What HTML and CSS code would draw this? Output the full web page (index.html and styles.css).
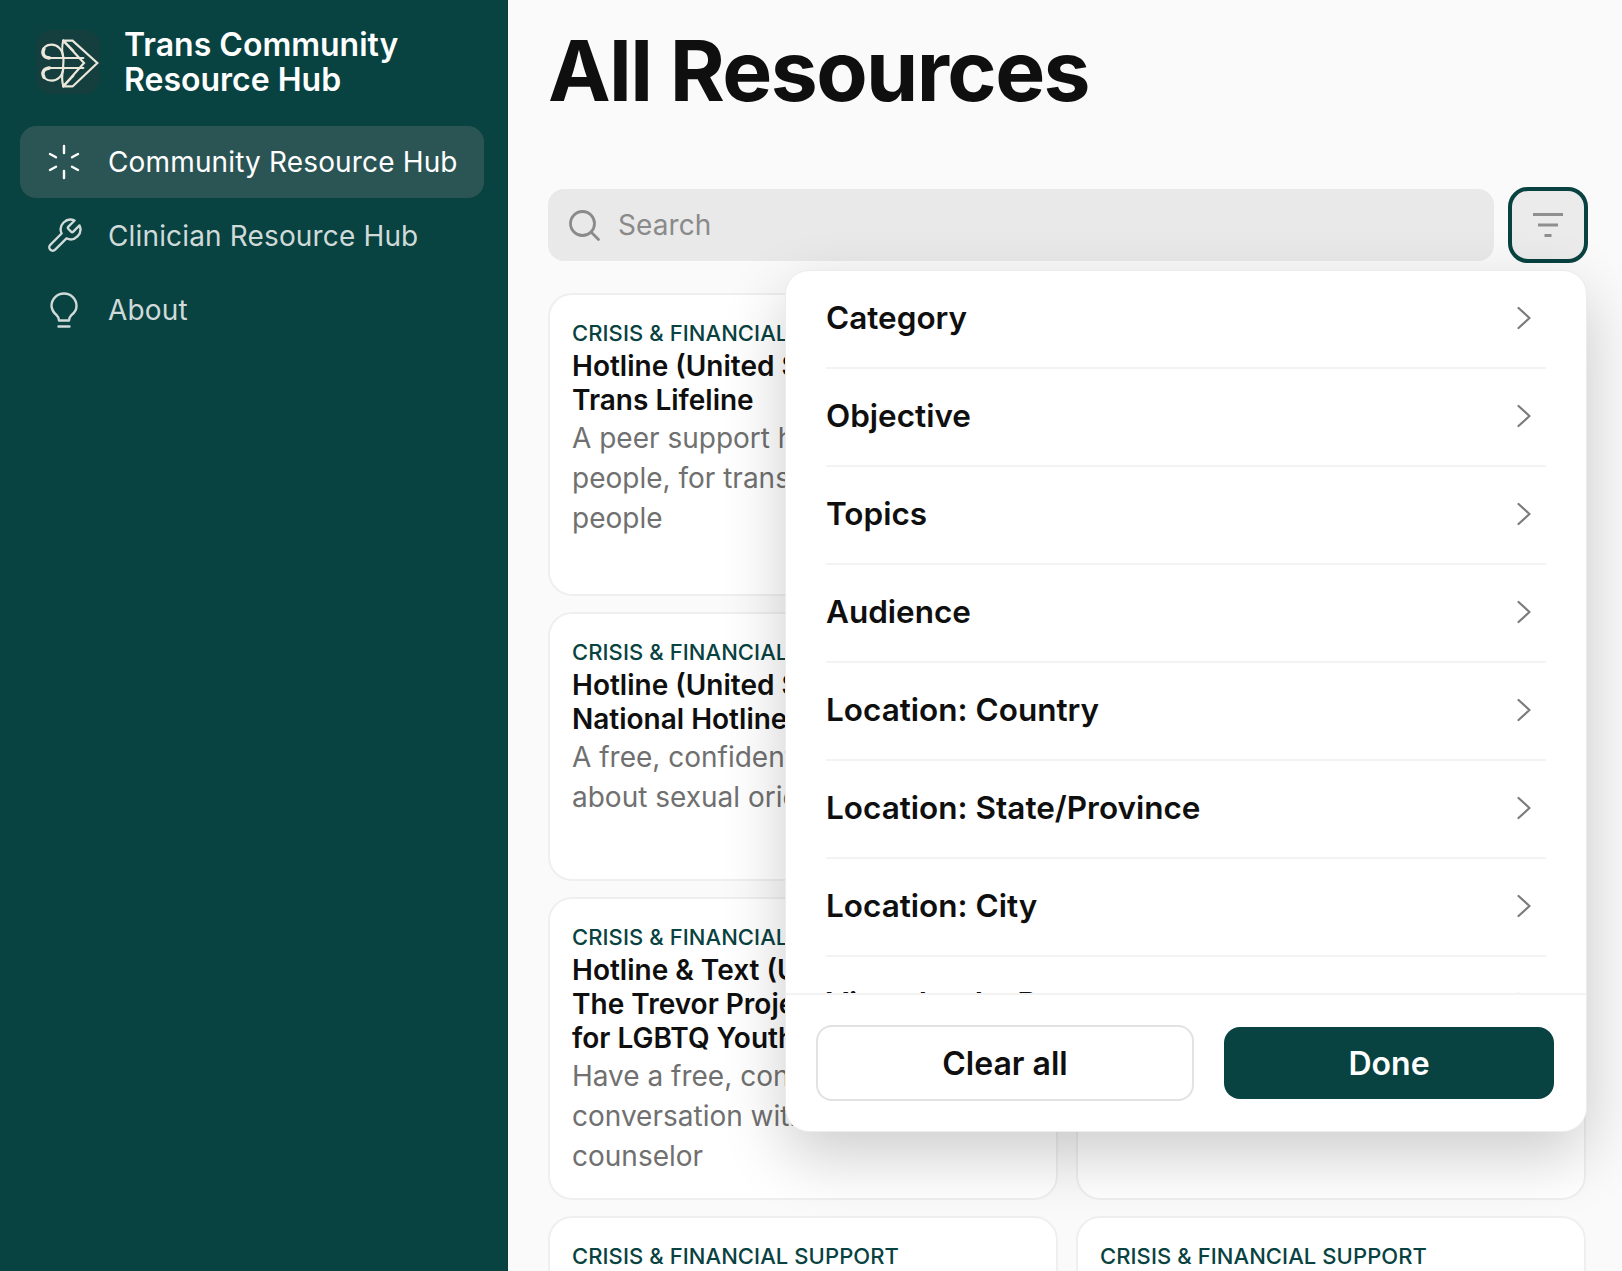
FILE: index.html
```html
<!DOCTYPE html>
<html lang="en">
<head>
<meta charset="utf-8">
<title>All Resources</title>
<link rel="stylesheet" href="styles.css">
</head>
<body>
<div class="app">
  <aside class="sidebar">
    <div class="brand">
      <div class="brand-logo">
        <svg viewBox="48 28 192 192" width="64" height="64" fill="none" stroke="#ebe7da" stroke-width="6.500" stroke-linecap="round" stroke-linejoin="miter">
          <path d="M160 62 L232 127 L160 195"/>
          <path d="M130 60 L192 127 L130 197"/>
          <path d="M130 60 H158 M130 197 H158"/>
          <path d="M130 197 L160 165 M130 60 L160 90"/>
          <path d="M130 112 C128 85 112 72 95 72 C78 72 68 82 68 93 C68 105 80 112 95 112 H190"/>
          <path d="M130 142 C128 168 112 180 95 180 C78 180 68 170 68 158 C68 148 80 142 95 142 H190"/>
          <path d="M130 60 C125 75 127 100 130 112 C132 125 128 130 130 142 C127 155 125 180 130 197"/>
          <path d="M72 84 C64 100 72 110 88 112 M72 170 C64 154 72 144 88 142" stroke-width="10"/>
        </svg>
      </div>
      <div class="brand-name">Trans Community Resource Hub</div>
    </div>
    <nav class="nav">
      <a class="nav-item active">
        <svg class="nav-icon" viewBox="0 0 36 36" fill="none" stroke="currentColor" stroke-width="2.400" stroke-linecap="round"><path d="M18 2v7M18 27v7M4 10l6 3.300M26 22.700l6 3.300M4 26l6-3.300M26 13.300l6-3.300"/></svg>
        <span>Community Resource Hub</span>
      </a>
      <a class="nav-item">
        <svg class="nav-icon" viewBox="1 1 22 22" fill="none" stroke="currentColor" stroke-width="1.450" stroke-linecap="round" stroke-linejoin="round"><path d="M14.700 6.300a1 1 0 0 0 0 1.400l1.600 1.600a1 1 0 0 0 1.400 0l3.770-3.770a6 6 0 0 1-7.940 7.940l-6.910 6.910a2.120 2.120 0 0 1-3-3l6.910-6.910a6 6 0 0 1 7.940-7.940l-3.760 3.760z"/></svg>
        <span>Clinician Resource Hub</span>
      </a>
      <a class="nav-item">
        <svg class="nav-icon" viewBox="0 0 36 36" fill="none" stroke="currentColor" stroke-width="2.400" stroke-linecap="round" stroke-linejoin="round"><path d="M13 28.500c0-2.500-1-4-2.800-5.800A13 13 0 0 1 5.500 14a12.500 12.500 0 0 1 25 0c0 3.300-1.600 6.500-4.700 8.700-1.800 1.800-2.800 3.300-2.800 5.800zM12.500 34.500h11"/></svg>
        <span>About</span>
      </a>
    </nav>
  </aside>
  <main class="main">
    <h1 class="page-title">All Resources</h1>
    <div class="toolbar">
      <div class="search">
        <svg class="search-icon" viewBox="0 0 36 36" fill="none" stroke="#8a8a8a" stroke-width="2.800" stroke-linecap="round"><circle cx="16.500" cy="16.500" r="12"/><path d="M25.500 25.500l7 7"/></svg>
        <span>Search</span>
      </div>
      <button class="filter-btn" type="button" aria-label="Filter">
        <svg viewBox="0 0 30 24" width="30" height="24" fill="none" stroke="#8f8f8f" stroke-width="3"><path d="M0 1.500h30M5 12h20M11.500 22.500h7"/></svg>
      </button>
    </div>
    <div class="cards">
      <article class="card">
        <div class="card-cat">Crisis &amp; Financial Support</div>
        <h2 class="card-title">Hotline (United States)<br>Trans Lifeline</h2>
        <p class="card-desc">A peer support hotline by trans people, for trans and questioning people</p>
      </article>
      <article class="card">
        <div class="card-cat">Crisis &amp; Financial Support</div>
        <h2 class="card-title">Hotline (United States)<br>988 Lifeline</h2>
        <p class="card-desc">Free and confidential support</p>
      </article>
      <article class="card">
        <div class="card-cat">Crisis &amp; Financial Support</div>
        <h2 class="card-title">Hotline (United States)<br>National Hotline</h2>
        <p class="card-desc">A free, confidential place to talk about sexual orientation</p>
      </article>
      <article class="card">
        <div class="card-cat">Crisis &amp; Financial Support</div>
        <h2 class="card-title">Hotline (United States)<br>Crisis Text Line</h2>
        <p class="card-desc">Free, around the clock support</p>
      </article>
      <article class="card">
        <div class="card-cat">Crisis &amp; Financial Support</div>
        <h2 class="card-title">Hotline &amp; Text (United States)<br>The Trevor Project: Crisis Line<br>for LGBTQ Youth</h2>
        <p class="card-desc">Have a free, confidential online conversation with a trained crisis counselor</p>
      </article>
      <article class="card">
        <div class="card-cat">Crisis &amp; Financial Support</div>
        <h2 class="card-title">Hotline (United States)<br>Peer Support</h2>
        <p class="card-desc">Talk with a peer</p>
      </article>
      <article class="card">
        <div class="card-cat">Crisis &amp; Financial Support</div>
      </article>
      <article class="card">
        <div class="card-cat">Crisis &amp; Financial Support</div>
      </article>
    </div>
  </main>
  <section class="filter-panel">
    <div class="filter-list">
      <div class="filter-row"><span>Category</span><svg class="chev" viewBox="0 0 16 24" fill="none" stroke="#7c7c7c" stroke-width="2.200" stroke-linecap="round" stroke-linejoin="round"><path d="M2.500 2l11 10-11 10"/></svg></div>
      <div class="filter-row"><span>Objective</span><svg class="chev" viewBox="0 0 16 24" fill="none" stroke="#7c7c7c" stroke-width="2.200" stroke-linecap="round" stroke-linejoin="round"><path d="M2.500 2l11 10-11 10"/></svg></div>
      <div class="filter-row"><span>Topics</span><svg class="chev" viewBox="0 0 16 24" fill="none" stroke="#7c7c7c" stroke-width="2.200" stroke-linecap="round" stroke-linejoin="round"><path d="M2.500 2l11 10-11 10"/></svg></div>
      <div class="filter-row"><span>Audience</span><svg class="chev" viewBox="0 0 16 24" fill="none" stroke="#7c7c7c" stroke-width="2.200" stroke-linecap="round" stroke-linejoin="round"><path d="M2.500 2l11 10-11 10"/></svg></div>
      <div class="filter-row"><span>Location: Country</span><svg class="chev" viewBox="0 0 16 24" fill="none" stroke="#7c7c7c" stroke-width="2.200" stroke-linecap="round" stroke-linejoin="round"><path d="M2.500 2l11 10-11 10"/></svg></div>
      <div class="filter-row"><span>Location: State/Province</span><svg class="chev" viewBox="0 0 16 24" fill="none" stroke="#7c7c7c" stroke-width="2.200" stroke-linecap="round" stroke-linejoin="round"><path d="M2.500 2l11 10-11 10"/></svg></div>
      <div class="filter-row"><span>Location: City</span><svg class="chev" viewBox="0 0 16 24" fill="none" stroke="#7c7c7c" stroke-width="2.200" stroke-linecap="round" stroke-linejoin="round"><path d="M2.500 2l11 10-11 10"/></svg></div>
      <div class="filter-row"><span>Virtual or In-Person</span><svg class="chev" viewBox="0 0 16 24" fill="none" stroke="#7c7c7c" stroke-width="2.200" stroke-linecap="round" stroke-linejoin="round"><path d="M2.500 2l11 10-11 10"/></svg></div>
    </div>
    <div class="filter-footer">
      <button class="btn btn-clear" type="button">Clear all</button>
      <button class="btn btn-done" type="button">Done</button>
    </div>
  </section>
</div>
</body>
</html>
```

FILE: styles.css
```css
* { box-sizing: border-box; }
html, body { margin: 0; height: 100%; overflow: hidden; }
body { font-family: Inter, "Liberation Sans", sans-serif; background: #fafafa; color: #0f0f0f; }
.app { display: flex; height: 1271px; position: relative; overflow: hidden; }

.sidebar { width: 508px; flex: none; background: #084241; border-right: 1px solid #0a3c3c; padding: 27px 23px 0 20px; }
.brand { display: flex; align-items: center; gap: 24px; padding-left: 16px; }
.brand-logo { width: 64px; height: 64px; border-radius: 16px; background: #153f3e; flex: none; }
.brand-logo svg { display: block; }
.brand-name { font-size: 32px; line-height: 35px; font-weight: 600; color: #fff; width: 320px; }
.nav { margin-top: 29px; display: flex; flex-direction: column; gap: 2px; }
.nav-item { height: 72px; border-radius: 16px; display: flex; align-items: center; gap: 26px; padding-left: 26px; font-size: 28px; letter-spacing: 0.15px; color: #cfdad9; }
.nav-item.active { background: #2b5554; color: #fff; }
.nav-icon { width: 36px; height: 36px; flex: none; }

.main { flex: 1; min-width: 0; padding: 0 34px 0 40px; }
.page-title { margin: 21px 0 0; font-size: 84px; line-height: 100px; font-weight: 700; letter-spacing: -1.6px; color: #0f0f0f; }
.toolbar { margin-top: 66px; display: flex; align-items: center; gap: 14px; }
.search { flex: 1; height: 72px; border-radius: 16px; background: #e9e9e9; display: flex; align-items: center; gap: 16px; padding-left: 18px; font-size: 28px; letter-spacing: 0.1px; color: #8a8a8a; }
.search-icon { width: 36px; height: 36px; flex: none; }
.filter-btn { width: 80px; height: 76px; flex: none; border: 4px solid #084241; border-radius: 20px; background: #ebebeb; display: flex; align-items: center; justify-content: center; padding: 0; }
.filter-btn svg { display: block; }
.cards { margin-top: 30px; display: grid; grid-template-columns: 510px 510px; grid-template-rows: 303px 269px 303px 301px; gap: 16px 18px; }
.card { background: #fff; border: 2px solid #efefef; border-radius: 24px; padding: 23px 22px; overflow: hidden; }
.card-cat { font-size: 22px; line-height: 31px; font-weight: 500; letter-spacing: 0.08px; text-transform: uppercase; color: #084241; }
.card-title { margin: 0; font-size: 28px; line-height: 34px; font-weight: 600; color: #0f0f0f; }
.card-desc { margin: 1px 0 0; font-size: 28px; line-height: 40px; color: #707070; }

.filter-panel { position: absolute; left: 785px; top: 270px; width: 802px; height: 862px; background: #fff; border: 1px solid #ececec; border-radius: 24px; box-shadow: 0 24px 64px rgba(0,0,0,.2); display: flex; flex-direction: column; overflow: hidden; }
.filter-list { flex: 1; min-height: 0; overflow: hidden; padding: 0 40px; }
.filter-row { height: 98px; flex: none; display: flex; align-items: center; justify-content: space-between; padding: 0 14px 4px 0; border-bottom: 2px solid #f3f3f3; font-size: 31.500px; font-weight: 600; color: #0f0f0f; }
.chev { width: 16px; height: 24px; flex: none; margin-top: 2px; }
.filter-footer { flex: none; border-top: 2px solid #f3f3f3; height: 138px; display: flex; align-items: center; gap: 30px; padding: 0 30px; }
.btn { height: 72px; border-radius: 16px; font-family: inherit; font-size: 32px; font-weight: 600; display: flex; align-items: center; justify-content: center; padding: 0; }
.btn-clear { width: 378px; height: 76px; background: #fff; border: 2px solid #e2e2e2; color: #0f0f0f; }
.btn-done { width: 330px; background: #084241; border: none; color: #fff; }
```
